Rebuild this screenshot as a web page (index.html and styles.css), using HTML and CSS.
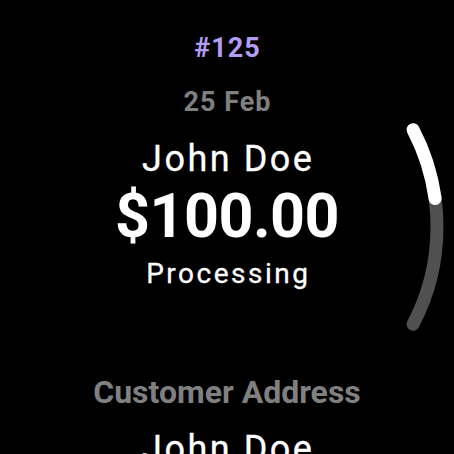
FILE: index.html
```html
<!DOCTYPE html>
<html lang="en">
<head>
    <meta charset="UTF-8">
    <meta name="viewport" content="width=device-width, initial-scale=1.0">
    <title>Order #125</title>
    <link rel="stylesheet" href="styles.css">
</head>
<body>
    <div class="screen">
        <div class="order-list">
            <div class="order-id">#125</div>
            <div class="order-date">25 Feb</div>
            <div class="customer">John Doe</div>
            <div class="amount">$100.00</div>
            <div class="status">Processing</div>
            <div class="section-label">Customer Address</div>
            <div class="section-value">John Doe</div>
        </div>

        <!-- scroll position indicator -->
        <svg class="scroll-indicator" width="454" height="454" viewBox="0 0 454 454">
            <path class="track" d="M 413.1 129.7 A 210 210 0 0 1 413.1 324.3" />
            <path class="thumb" d="M 413.1 129.7 A 210 210 0 0 1 435.1 198.5" />
        </svg>
    </div>
</body>
</html>
```

FILE: styles.css
```css
* {
    margin: 0;
    padding: 0;
    box-sizing: border-box;
}

body {
    background: #000;
    font-family: Roboto, 'Noto Sans', sans-serif;
    color: #fff;
    width: 454px;
    height: 454px;
    overflow: hidden;
}

.screen {
    position: relative;
    width: 454px;
    height: 454px;
    overflow: hidden;
}

.order-list {
    display: flex;
    flex-direction: column;
    align-items: center;
    padding-top: 32px;
    text-align: center;
    white-space: nowrap;
}

.order-id {
    font-size: 27px;
    line-height: 32px;
    font-weight: 700;
    color: #b49cf5;
    letter-spacing: 1px;
    padding-left: 1px;
}

.order-date {
    margin-top: 22px;
    font-size: 27px;
    line-height: 32px;
    font-weight: 700;
    color: #808080;
    letter-spacing: 1px;
    padding-left: 1px;
}

.customer,
.section-value {
    margin-top: 21px;
    font-size: 36px;
    line-height: 40px;
    letter-spacing: 2.5px;
    padding-left: 2.5px;
    -webkit-text-stroke: 0.3px #fff;
}

.amount {
    margin-top: 4px;
    font-size: 61px;
    line-height: 66px;
    font-weight: 700;
    letter-spacing: -0.5px;
}

.status {
    margin-top: 9px;
    font-size: 28px;
    line-height: 32px;
    letter-spacing: 2.5px;
    padding-left: 2.5px;
    -webkit-text-stroke: 0.3px #fff;
}

.section-label {
    margin-top: 84px;
    font-size: 32px;
    line-height: 36px;
    font-weight: 700;
    color: #808080;
}

.section-value {
    margin-top: 19px;
}

.scroll-indicator {
    position: absolute;
    top: 0;
    left: 0;
}

.scroll-indicator path {
    fill: none;
    stroke-width: 13;
    stroke-linecap: round;
}

.track {
    stroke: #505050;
}

.thumb {
    stroke: #fff;
}
```
